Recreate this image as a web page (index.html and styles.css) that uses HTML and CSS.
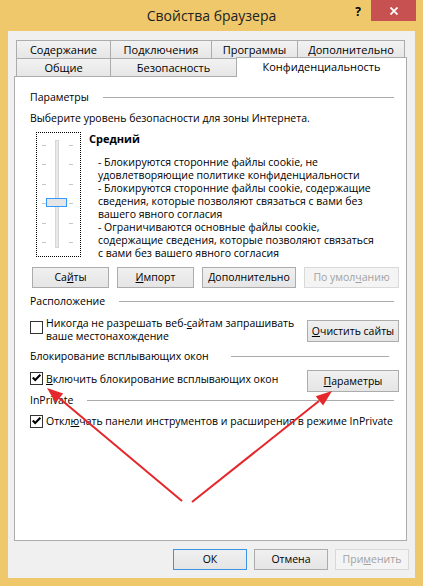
FILE: index.html
```html
<!DOCTYPE html>
<html>
  <head>
    <meta charset="UTF-8">
    <title>Свойства браузера</title>
    <link rel="stylesheet" href="styles.css">
  </head>
  <body>
    <div class="titlebar">
      <h1 class="title">Свойства браузера</h1>
      <div class="caption">
        <span class="help">?</span>
        <span class="close">
          <svg width="8" height="8" viewBox="0 0 8 8"><path d="M0.5 0.5 L7.5 7.5 M7.5 0.5 L0.5 7.5" stroke="#fff" stroke-width="1.8"/></svg>
        </span>
      </div>
    </div>

    <div class="client">
      <div class="tab-row">
        <div class="tab tab-content">Содержание</div>
        <div class="tab tab-connections">Подключения</div>
        <div class="tab tab-programs">Программы</div>
        <div class="tab tab-advanced">Дополнительно</div>
      </div>
      <div class="tab-row">
        <div class="tab tab-general">Общие</div>
        <div class="tab tab-security">Безопасность</div>
        <div class="tab tab-privacy active">Конфиденциальность</div>
      </div>

      <div class="panel">
        <div class="legend legend-params">Параметры</div>
        <div class="intro">Выберите уровень безопасности для зоны Интернета.</div>

        <div class="level">
          <div class="slider">
            <div class="ticks"><span></span><span></span><span></span><span></span><span></span><span></span></div>
            <div class="track"><div class="thumb"></div></div>
            <div class="ticks"><span></span><span></span><span></span><span></span><span></span><span></span></div>
          </div>
          <div class="level-text">
            <div class="level-name">Средний</div>
            <div class="level-desc">
              - Блокируются сторонние файлы cookie, не<br>
              удовлетворяющие политике конфиденциальности<br>
              - Блокируются сторонние файлы cookie, содержащие<br>
              сведения, которые позволяют связаться с вами без<br>
              вашего явного согласия<br>
              - Ограничиваются основные файлы cookie,<br>
              содержащие сведения, которые позволяют связаться<br>
              с вами без вашего явного согласия
            </div>
          </div>
        </div>

        <div class="actions">
          <button class="btn btn-sites">Са<u>й</u>ты</button>
          <button class="btn btn-import"><u>И</u>мпорт</button>
          <button class="btn btn-more"><u>Д</u>ополнительно</button>
          <button class="btn btn-default-level" disabled>По умол<u>ч</u>анию</button>
        </div>

        <div class="legend legend-location">Расположение</div>
        <div class="option option-location">
          <span class="check"></span>
          <div class="option-text">Никогда не разрешать веб-<u>с</u>айтам запрашивать<br>ваше местонахождение</div>
          <button class="btn btn-side btn-clear"><u>О</u>чистить сайты</button>
        </div>

        <div class="legend legend-popup">Блокирование всплывающих окон</div>
        <div class="option option-popup">
          <span class="check"><svg width="11" height="11" viewBox="0 0 11 11"><polygon points="1,5.2 2.6,3.7 4.2,5.4 8.6,1 10.1,2.5 4.2,8.6" fill="#000"/></svg></span>
          <div class="option-text"><u>В</u>ключить блокирование всплывающих окон</div>
          <button class="btn btn-side"><u>П</u>араметры</button>
        </div>

        <div class="legend legend-inprivate">InPrivate</div>
        <div class="option option-inprivate">
          <span class="check"><svg width="11" height="11" viewBox="0 0 11 11"><polygon points="1,5.2 2.6,3.7 4.2,5.4 8.6,1 10.1,2.5 4.2,8.6" fill="#000"/></svg></span>
          <div class="option-text">Откл<u>ю</u>чать панели инструментов и расширения в режиме InPrivate</div>
        </div>
      </div>

      <div class="dialog-buttons">
        <button class="btn btn-ok">ОК</button>
        <button class="btn">Отмена</button>
        <button class="btn" disabled>При<u>м</u>енить</button>
      </div>
    </div>

    <svg class="arrows" width="423" height="586" viewBox="0 0 423 586">
      <g stroke="#E5262B" stroke-width="2" fill="none">
        <line x1="182" y1="501" x2="59" y2="398"/>
        <line x1="192" y1="502" x2="319" y2="401"/>
      </g>
      <g fill="#E5262B">
        <polygon points="47,388 63.2,393.5 55.5,402.8"/>
        <polygon points="332,391 323.1,405.6 315.7,396.2"/>
      </g>
    </svg>
  </body>
</html>
```

FILE: styles.css
```css
* {
  box-sizing: border-box;
}

html, body {
  margin: 0;
}

body {
  position: relative;
  width: 423px;
  height: 586px;
  overflow: hidden;
  background: #F0C86C;
  font-family: "Open Sans", "Noto Sans", sans-serif;
  font-size: 10.5px;
  color: #000;
}

/* title bar */

.titlebar {
  display: grid;
  grid-template-columns: 1fr auto 1fr;
  height: 31px;
}

.title {
  grid-column: 2;
  margin: 0;
  font-size: 14px;
  font-weight: normal;
  line-height: 31px;
  color: #222;
}

.caption {
  grid-column: 3;
  display: flex;
  justify-content: flex-end;
  align-items: flex-start;
  padding-right: 7px;
}

.help {
  margin: 5px 10px 0 0;
  font-size: 12px;
  font-weight: bold;
  line-height: 14px;
}

.close {
  display: flex;
  align-items: center;
  justify-content: center;
  width: 45px;
  height: 21px;
  background: #C75050;
}

/* client area */

.client {
  height: 547px;
  margin: 0 8px;
  padding: 9px 8px 0 6px;
  background: #F0F0F0;
}

.tab-row {
  display: flex;
  align-items: flex-start;
  height: 18px;
  margin-left: 2px;
}

.tab {
  height: 18px;
  border: 1px solid #ACACAC;
  border-right: 0;
  border-bottom: 0;
  background: linear-gradient(#F2F2F2, #E6E6E6);
  font-size: 11px;
  line-height: 17px;
  text-align: center;
  white-space: nowrap;
}

.tab:last-child {
  border-right: 1px solid #ACACAC;
}

.tab-content, .tab-general { width: 94px; }
.tab-connections { width: 101px; }
.tab-programs { width: 86px; }
.tab-advanced { width: 108px; }
.tab-security { width: 126px; }
.tab-privacy { width: 171px; }

.tab.active {
  position: relative;
  z-index: 1;
  height: 20px;
  margin-top: -1px;
  background: #fff;
}

.panel {
  height: 465px;
  padding: 0 7px 0 15px;
  border: 1px solid #ACACAC;
  background: #fff;
}

.legend {
  display: flex;
  align-items: center;
  height: 14px;
  line-height: 14px;
}

.legend::after {
  content: "";
  flex: 1;
  margin: 0 5px 0 14px;
  border-top: 1px solid #ABABAB;
}

.legend-params { margin-top: 13px; }
.legend-location { margin-top: 6px; }
.legend-popup { margin-top: 6px; }
.legend-inprivate { margin-top: 1px; }

.legend-popup::after {
  margin: 0 10px 0 22px;
}

.intro {
  margin-top: 7px;
  line-height: 14px;
}

/* privacy level slider */

.level {
  display: flex;
  align-items: flex-start;
  height: 128px;
  margin-top: 7px;
}

.slider {
  display: flex;
  align-items: flex-start;
  width: 45px;
  height: 125px;
  margin-left: 6px;
  padding-left: 5px;
  border: 1px dotted #000;
}

.ticks {
  display: flex;
  flex-direction: column;
  justify-content: space-between;
  width: 4px;
  height: 98px;
  margin-top: 12px;
}

.ticks span {
  height: 1px;
  background: #C6C6C6;
}

.track {
  position: relative;
  width: 4px;
  height: 108px;
  margin: 7px 10px 0 9px;
  border: 1px solid #D6D6D6;
  background: #E7EAEA;
}

.thumb {
  position: absolute;
  left: -10px;
  top: 57px;
  width: 21px;
  height: 9px;
  border: 1px solid #3399FF;
  background: #E6E6E6;
}

.level-text {
  margin-left: 8px;
  line-height: 13px;
}

.level-name {
  font-size: 11px;
  font-weight: bold;
}

.level-desc {
  margin-top: 11px;
  padding-left: 9px;
}

/* buttons */

.btn {
  height: 21px;
  padding: 0;
  border: 1px solid #ACACAC;
  background: linear-gradient(#F0F0F0, #E5E5E5);
  font: inherit;
  line-height: 19px;
  color: #000;
  text-align: center;
  white-space: nowrap;
}

.btn[disabled] {
  border-color: #D9D9D9;
  background: #F4F4F4;
  color: #A2A2A2;
}

.actions {
  display: flex;
  gap: 8px;
  margin-top: 7px;
  padding-left: 2px;
}

.btn-sites, .btn-import { width: 77px; }
.btn-more { width: 94px; }
.btn-default-level { width: 95px; }

.btn-side {
  flex: none;
  width: 92px;
  height: 22px;
  line-height: 20px;
}

/* check options */

.option {
  display: flex;
  align-items: flex-start;
}

.check {
  flex: none;
  display: flex;
  width: 13px;
  height: 13px;
  border: 1px solid #333;
  background: #fff;
}

.option-text {
  flex: 1;
  margin-left: 3px;
  line-height: 13px;
  white-space: nowrap;
}

.option-location { margin-top: 9px; }
.option-location .check { margin-top: 4px; }
.option-location .btn { margin-top: 3px; }

.option-popup { margin-top: 7px; }
.option-popup .check { margin-top: 2px; }
.option-popup .option-text { margin-top: 3px; }

.option-inprivate { margin-top: 8px; }

/* dialog buttons */

.dialog-buttons {
  display: flex;
  justify-content: flex-end;
  gap: 7px;
  margin: 8px -2px 0 0;
}

.dialog-buttons .btn {
  width: 74px;
}

.btn-ok {
  border-color: #3C95E3;
}

.arrows {
  position: absolute;
  top: 0;
  left: 0;
  pointer-events: none;
}
```
